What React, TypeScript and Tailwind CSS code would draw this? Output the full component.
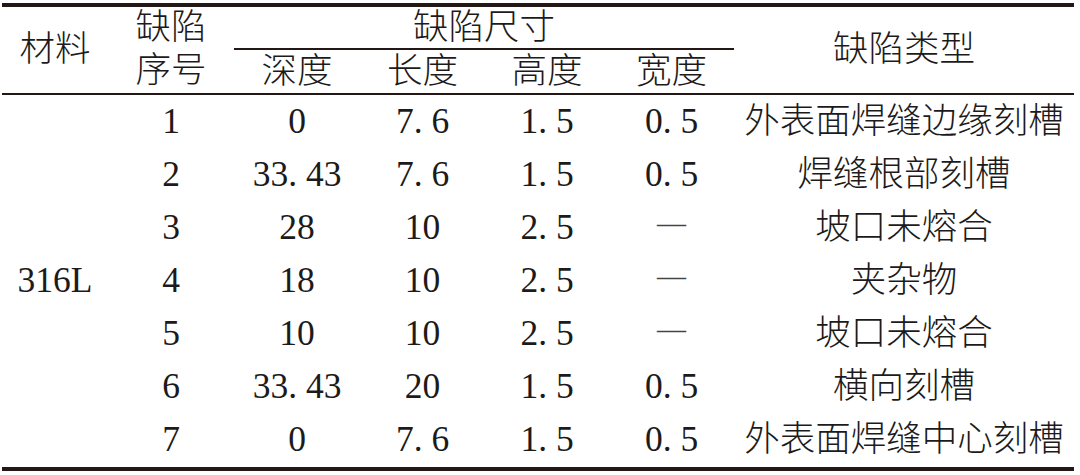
import React from "react";

type Row = {
  no: string;
  depth: string;
  length: string;
  height: string;
  width: string;
  type: string;
};

const rows: Row[] = [
  { no: "1", depth: "0", length: "7.6", height: "1.5", width: "0.5", type: "外表面焊缝边缘刻槽" },
  { no: "2", depth: "33.43", length: "7.6", height: "1.5", width: "0.5", type: "焊缝根部刻槽" },
  { no: "3", depth: "28", length: "10", height: "2.5", width: "—", type: "坡口未熔合" },
  { no: "4", depth: "18", length: "10", height: "2.5", width: "—", type: "夹杂物" },
  { no: "5", depth: "10", length: "10", height: "2.5", width: "—", type: "坡口未熔合" },
  { no: "6", depth: "33.43", length: "20", height: "1.5", width: "0.5", type: "横向刻槽" },
  { no: "7", depth: "0", length: "7.6", height: "1.5", width: "0.5", type: "外表面焊缝中心刻槽" },
];

// wide period, like the half-width cell of the printed font
const Num = ({ v }: { v: string }) => {
  const parts = v.split(".");
  if (parts.length < 2) return <>{v}</>;
  return (
    <>
      {parts[0]}
      <span className="inline-block w-[0.5em] text-left">.</span>
      {parts[1]}
    </>
  );
};

const Cell = ({ children }: { children: React.ReactNode }) => (
  <div className="flex h-[53px] items-center justify-center whitespace-nowrap">{children}</div>
);

export default function App() {
  return (
    <div
      className="h-[475px] w-[1080px] bg-white pl-[2px] pt-[3px] text-[35.5px] font-light leading-none text-[#1c1a1a]"
      style={{ fontFamily: '"Liberation Serif", "Noto Sans CJK SC", serif' }}
    >
      <div className="w-[1072px]">
        {/* top rule */}
        <div className="h-[4px] bg-[#231815]" />

        {/* header */}
        <div className="grid grid-cols-[106px_126px_126px_125px_124px_125px_340px] grid-rows-[41px_2px_43px]">
          <div className="row-span-3 flex items-center justify-center">材料</div>
          <div className="row-span-3 flex flex-col">
            <div className="flex h-[41px] items-center justify-center">缺陷</div>
            <div className="flex h-[45px] items-center justify-center">序号</div>
          </div>
          <div className="col-span-4 flex items-center justify-center">缺陷尺寸</div>
          <div className="col-start-7 row-span-3 row-start-1 flex items-center justify-center">缺陷类型</div>
          <div className="col-span-4 col-start-3 row-start-2 bg-[#231815]" />
          <div className="col-start-3 row-start-3 flex items-center justify-center">深度</div>
          <div className="col-start-4 row-start-3 flex items-center justify-center">长度</div>
          <div className="col-start-5 row-start-3 flex items-center justify-center">高度</div>
          <div className="col-start-6 row-start-3 flex items-center justify-center">宽度</div>
        </div>

        {/* header rule */}
        <div className="h-[2px] bg-[#231815]" />

        {/* body */}
        <div className="grid grid-cols-[106px_126px_126px_125px_124px_125px_340px] pb-[1px]">
          <div className="row-span-7 flex items-center justify-center">316L</div>
          {rows.map((r) => (
            <React.Fragment key={r.no}>
              <Cell>{r.no}</Cell>
              <Cell><Num v={r.depth} /></Cell>
              <Cell><Num v={r.length} /></Cell>
              <Cell><Num v={r.height} /></Cell>
              <Cell>
                {r.width === "—" ? (
                  <span className="-mt-[8px] text-[29px] text-[#444]">—</span>
                ) : (
                  <Num v={r.width} />
                )}
              </Cell>
              <Cell>{r.type}</Cell>
            </React.Fragment>
          ))}
        </div>

        {/* bottom rule */}
        <div className="h-[4px] bg-[#231815]" />
      </div>
    </div>
  );
}
